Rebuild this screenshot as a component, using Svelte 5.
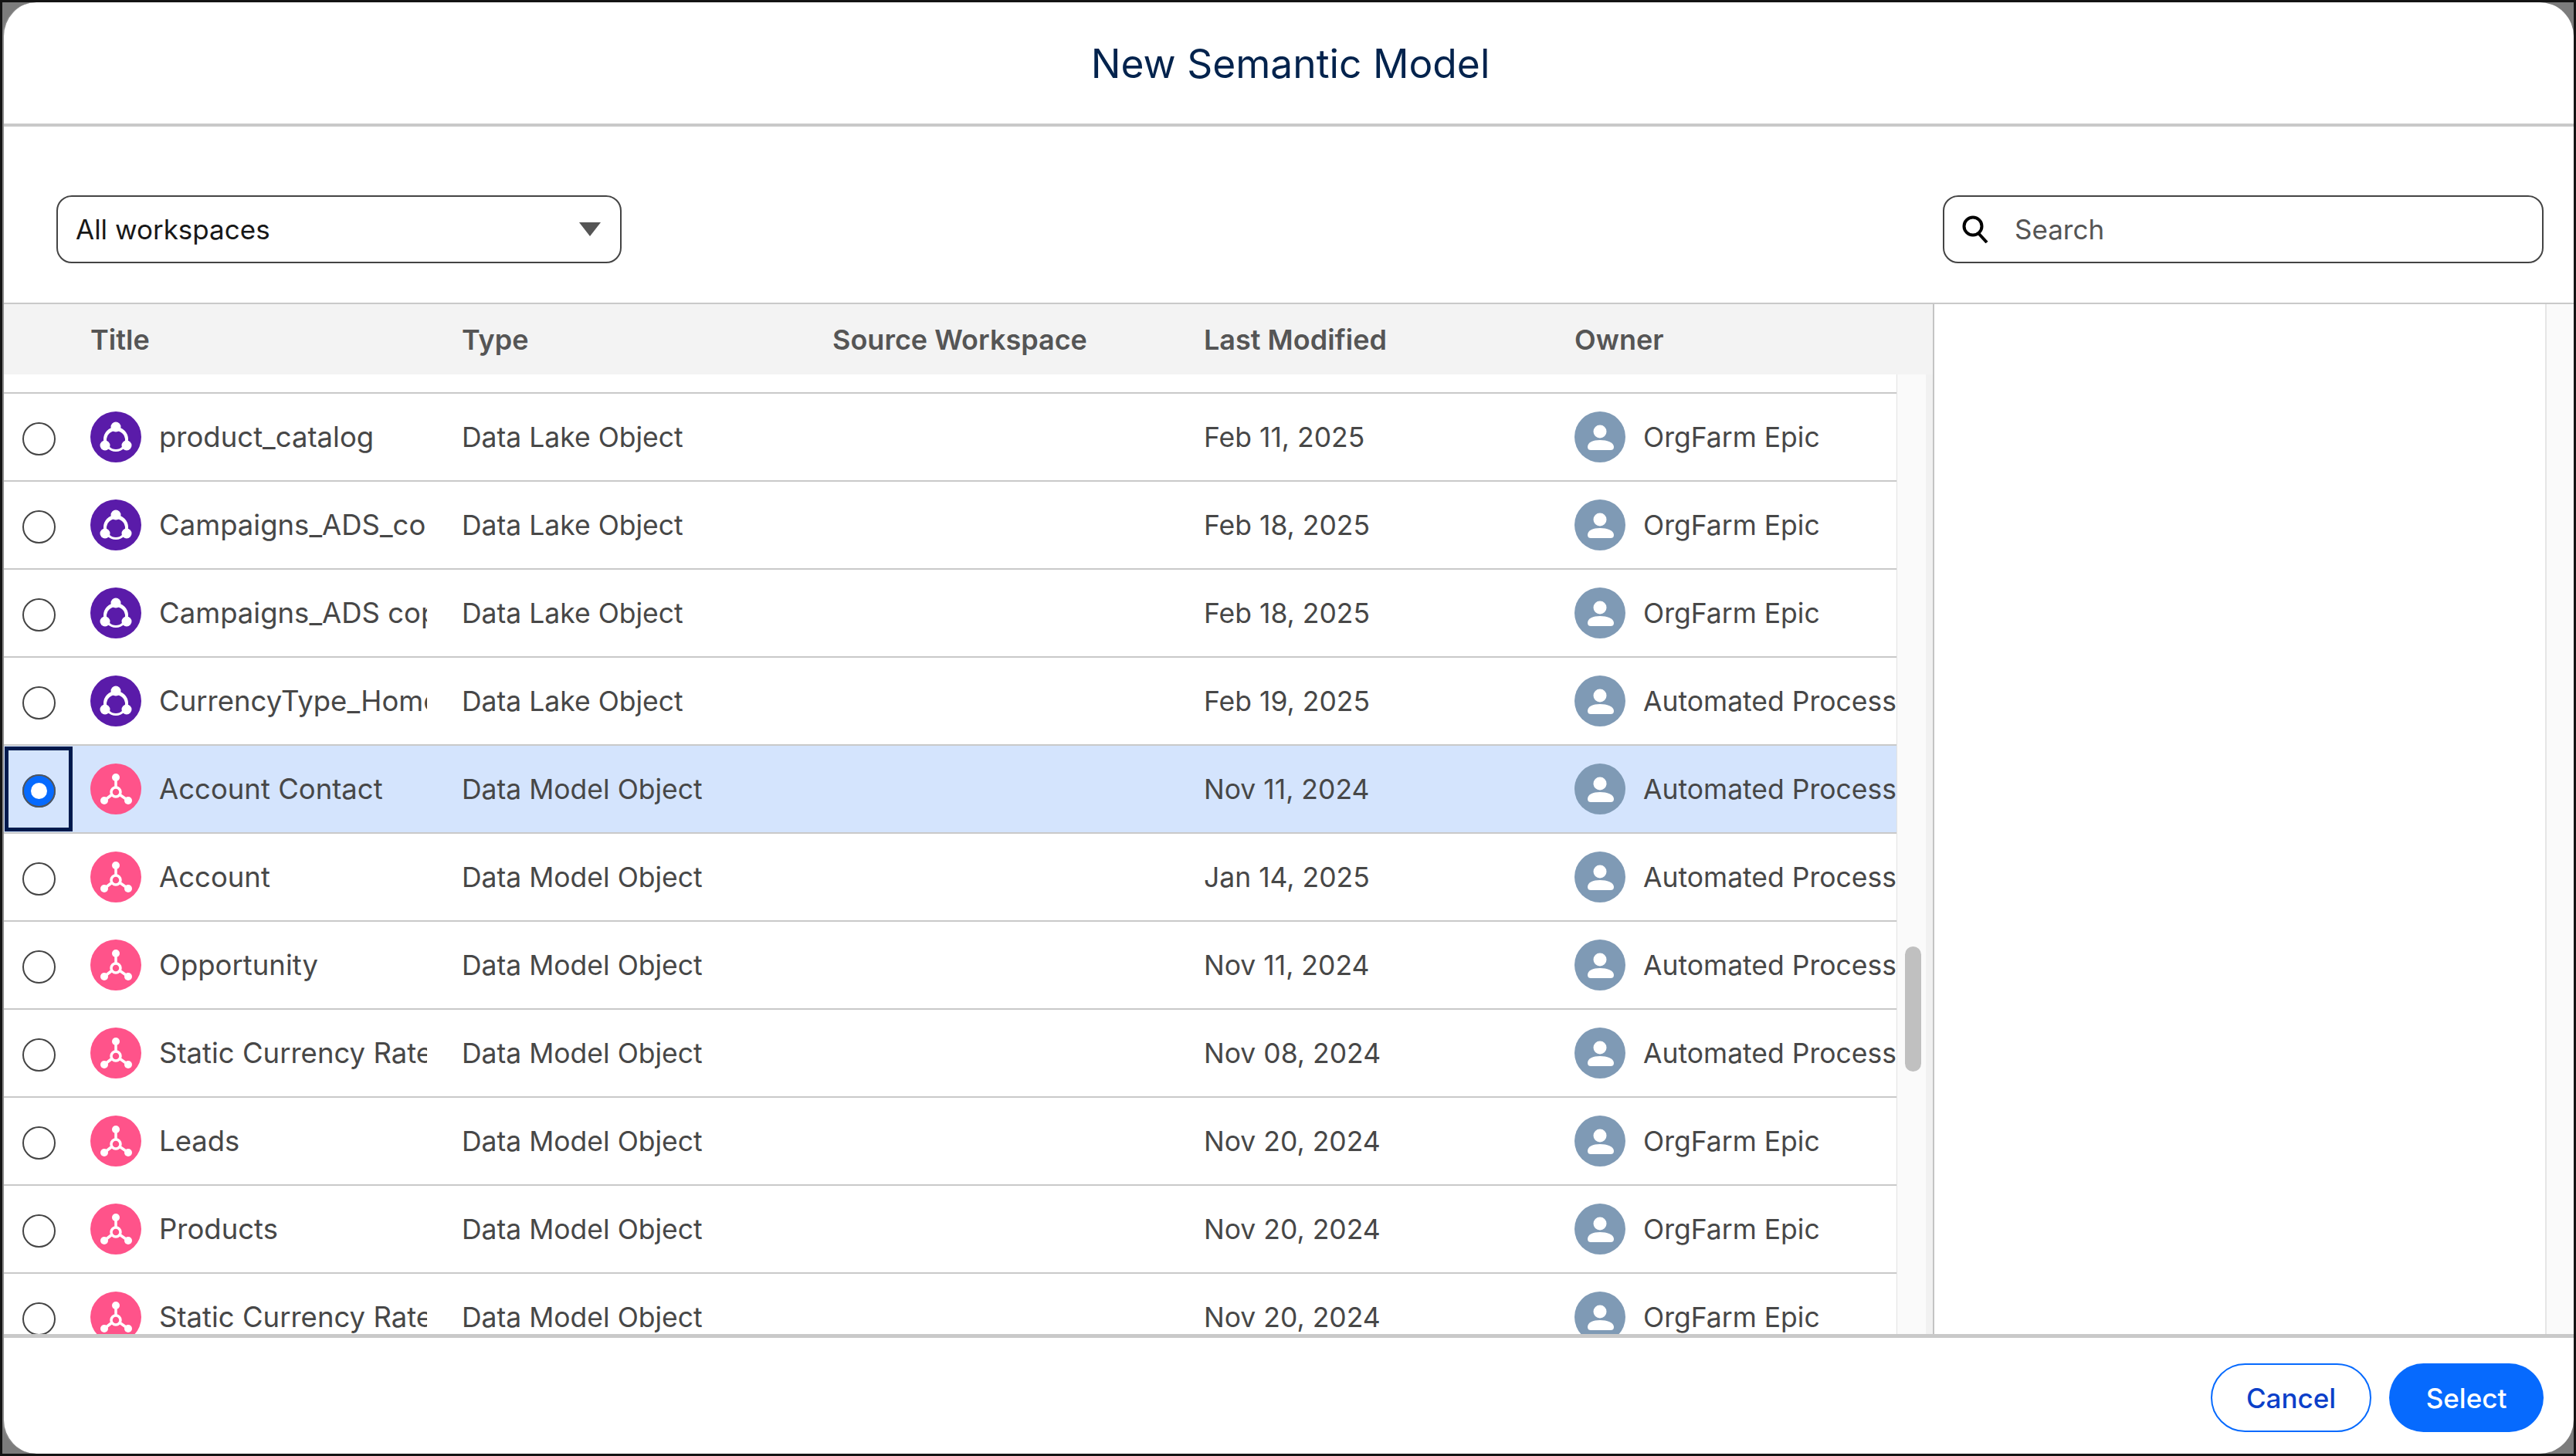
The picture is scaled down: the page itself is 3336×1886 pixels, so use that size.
<script>
  const lake = 'Data Lake Object';
  const dmo = 'Data Model Object';
  const epic = 'OrgFarm Epic';
  const auto = 'Automated Process';
  const rows = [
    { title: 'product_catalog', type: lake, date: 'Feb 11, 2025', owner: epic },
    { title: 'Campaigns_ADS_copy', type: lake, date: 'Feb 18, 2025', owner: epic },
    { title: 'Campaigns_ADS copy', type: lake, date: 'Feb 18, 2025', owner: epic },
    { title: 'CurrencyType_Home', type: lake, date: 'Feb 19, 2025', owner: auto },
    { title: 'Account Contact', type: dmo, date: 'Nov 11, 2024', owner: auto, selected: true },
    { title: 'Account', type: dmo, date: 'Jan 14, 2025', owner: auto },
    { title: 'Opportunity', type: dmo, date: 'Nov 11, 2024', owner: auto },
    { title: 'Static Currency Rates', type: dmo, date: 'Nov 08, 2024', owner: auto },
    { title: 'Leads', type: dmo, date: 'Nov 20, 2024', owner: epic },
    { title: 'Products', type: dmo, date: 'Nov 20, 2024', owner: epic },
    { title: 'Static Currency Rates', type: dmo, date: 'Nov 20, 2024', owner: epic }
  ];
</script>

<div class="screen">
  <div class="dialog">
    <header class="top">
      <h1>New Semantic Model</h1>
    </header>

    <div class="filters">
      <div class="select">
        <span>All workspaces</span>
        <svg class="caret" viewBox="0 0 28 18"><path d="M0 0h28L14 18z" /></svg>
      </div>
      <div class="search">
        <svg class="glass" viewBox="0 0 36 36">
          <circle cx="15" cy="14" r="11.5" />
          <path d="M22 23l11 12" />
        </svg>
        <span>Search</span>
      </div>
    </div>

    <div class="content">
      <div class="list">
        <div class="grid head">
          <span></span>
          <span>Title</span>
          <span>Type</span>
          <span>Source Workspace</span>
          <span>Last Modified</span>
          <span>Owner</span>
        </div>
        <div class="scroller">
          <div class="rows">
            <div class="spacer"></div>
            {#each rows as row}
              <div class="grid row" class:selected={row.selected}>
                <div class="check">
                  <span class="radio"></span>
                </div>
                <div class="name">
                  {#if row.type === lake}
                    <svg class="ico" viewBox="0 0 66 66">
                      <circle cx="33" cy="33" r="33" fill="#5a1ba9" />
                      <circle cx="33" cy="36" r="16" fill="#fff" />
                      <circle cx="33" cy="37" r="12" fill="#5a1ba9" />
                      <circle cx="33" cy="20" r="6.5" fill="#fff" />
                      <circle cx="19" cy="44" r="6.5" fill="#fff" />
                      <circle cx="47" cy="44" r="6.5" fill="#fff" />
                    </svg>
                  {:else}
                    <svg class="ico" viewBox="0 0 66 66">
                      <circle cx="33" cy="33" r="33" fill="#ff538a" />
                      <path class="spoke" d="M33 18v13M27 41l-9 7M39 41l10 7" />
                      <circle class="spoke" cx="33" cy="37" r="6" />
                      <circle cx="33" cy="18" r="5" fill="#fff" />
                      <circle cx="18" cy="48" r="5" fill="#fff" />
                      <circle cx="49" cy="48" r="5" fill="#fff" />
                    </svg>
                  {/if}
                  <span class="clip">{row.title}</span>
                </div>
                <span>{row.type}</span>
                <span></span>
                <span>{row.date}</span>
                <div class="owner">
                  <svg class="ico" viewBox="0 0 66 66">
                    <circle cx="33" cy="33" r="33" fill="#7f9ab5" />
                    <circle cx="33" cy="26" r="8.5" fill="#fff" />
                    <path d="M17 46c0-6 7-9 16-9s18 3 18 9c0 3-2 4-4 4H21c-2 0-4-1-4-4z" fill="#fff" />
                  </svg>
                  <span class="clip-owner">{row.owner}</span>
                </div>
              </div>
            {/each}
          </div>
          <div class="track">
            <div class="thumb"></div>
          </div>
          <div class="gutter"></div>
        </div>
      </div>
      <div class="preview">
        <div class="pane"></div>
        <div class="pane-track"></div>
      </div>
    </div>

    <footer class="bottom">
      <button class="btn ghost">Cancel</button>
      <button class="btn brand">Select</button>
    </footer>
  </div>
</div>

<style>
  :global(body) {
    margin: 0;
    background: #7c7c7c;
  }

  * {
    box-sizing: border-box;
  }

  .screen {
    width: 3336px;
    height: 1886px;
    border: 3px solid #141414;
    font-family: Inter, "Liberation Sans", sans-serif;
    font-size: 35px;
    color: #474747;
    overflow: hidden;
  }

  .dialog {
    height: 100%;
    display: flex;
    flex-direction: column;
    background: #fff;
    border-left: 2px solid #8a8a8a;
    border-radius: 44px;
    overflow: hidden;
  }

  .top {
    height: 161px;
    flex: none;
    display: flex;
    align-items: center;
    justify-content: center;
    border-bottom: 4px solid #c9c9c9;
    padding-left: 4px;
  }

  h1 {
    margin: 0;
    font-size: 51.5px;
    font-weight: 400;
    color: #03234d;
  }

  .filters {
    height: 228px;
    flex: none;
    display: flex;
    justify-content: space-between;
    padding: 89px 39px 0 68px;
  }

  .select,
  .search {
    height: 88px;
    display: flex;
    align-items: center;
    border: 2px solid #444;
    border-radius: 20px;
  }

  .select {
    width: 732px;
    justify-content: space-between;
    padding: 0 25px 0 23px;
    color: #181818;
  }

  .caret {
    width: 28px;
    height: 18px;
    fill: #555;
  }

  .search {
    width: 778px;
    padding-left: 22px;
    gap: 33px;
    color: #555;
  }

  .glass {
    width: 36px;
    height: 36px;
    fill: none;
    stroke: #000;
    stroke-width: 4;
  }

  .content {
    flex: 1;
    min-height: 0;
    display: flex;
    border-top: 2px solid #c9c9c9;
  }

  .list {
    width: 2500px;
    flex: none;
    display: flex;
    flex-direction: column;
    border-right: 2px solid #c4c4c4;
  }

  .grid {
    display: grid;
    grid-template-columns: 112px 481px 480px 481px 480px 1fr;
    align-items: center;
  }

  .head {
    height: 91px;
    flex: none;
    background: #f3f3f3;
    font-size: 36px;
    font-weight: 600;
    color: #555;
  }

  .scroller {
    flex: 1;
    min-height: 0;
    display: flex;
  }

  .rows {
    width: 2452px;
    flex: none;
    overflow: hidden;
    border-right: 1px solid #e3e3e3;
    font-size: 35.5px;
  }

  .spacer {
    height: 25px;
    border-bottom: 2px solid #c9c9c9;
  }

  .row {
    height: 114px;
    border-bottom: 2px solid #c9c9c9;
    white-space: nowrap;
  }

  .row.selected {
    background: #d4e4fd;
  }

  .check {
    width: 88px;
    height: 110px;
    margin-left: 1px;
    display: flex;
    align-items: center;
    justify-content: center;
    border: 5px solid transparent;
  }

  .selected .check {
    border-color: #001a4d;
  }

  .radio {
    width: 43px;
    height: 43px;
    margin-top: 5px;
    border-radius: 50%;
    border: 2px solid #444;
    background: #fff;
  }

  .selected .radio {
    border: 11px solid #066afe;
    outline: 2px solid #555;
    outline-offset: -2px;
  }

  .name,
  .owner {
    display: flex;
    align-items: center;
    gap: 23px;
    min-width: 0;
    overflow: hidden;
  }

  .ico {
    width: 66px;
    height: 66px;
    flex: none;
  }

  .spoke {
    fill: none;
    stroke: #fff;
    stroke-width: 3.5;
  }

  .clip {
    width: 347px;
    flex: none;
    overflow: hidden;
    font-size: 36.5px;
  }

  .clip-owner {
    flex: none;
  }

  .track {
    width: 37px;
    flex: none;
    background: #fafafa;
    padding: 741px 6px 0 10px;
  }

  .thumb {
    height: 162px;
    background: #c0c0c0;
    border-radius: 11px;
  }

  .gutter {
    flex: 1;
    background: #f1f1f1;
  }

  .preview {
    flex: 1;
    display: flex;
  }

  .pane {
    flex: 1;
    background: #fff;
    border-right: 2px solid #e6e6e6;
  }

  .pane-track {
    width: 35px;
    flex: none;
    background: #fafafa;
  }

  .bottom {
    height: 155px;
    flex: none;
    display: flex;
    justify-content: flex-end;
    align-items: flex-start;
    gap: 23px;
    padding: 33px 39px 0 0;
    border-top: 5px solid #c9c9c9;
  }

  .btn {
    height: 89px;
    border-radius: 45px;
    font: inherit;
    font-weight: 500;
  }

  .ghost {
    width: 208px;
    background: #fff;
    border: 2px solid #066afe;
    color: #0b3fc9;
  }

  .brand {
    width: 200px;
    background: #066afe;
    border: 0;
    color: #fff;
  }
</style>
